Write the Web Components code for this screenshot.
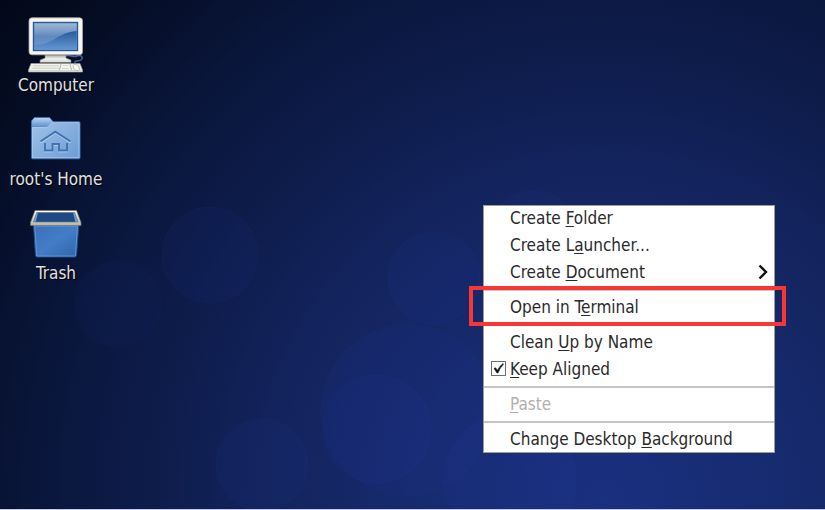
<!DOCTYPE html>
<html lang="en">
<head>
<meta charset="utf-8">
<title>Desktop</title>
<style>
  body { margin: 0; font: 17px/20px "DejaVu Sans Condensed", "DejaVu Sans", sans-serif; }
</style>
</head>
<body>
<desktop-surface>
  <desktop-shortcut icon="computer">Computer</desktop-shortcut>
  <desktop-shortcut icon="home">root's Home</desktop-shortcut>
  <desktop-shortcut icon="trash">Trash</desktop-shortcut>
  <context-menu slot="menu">
    <menu-entry>Create <u>F</u>older</menu-entry>
    <menu-entry>Create L<u>a</u>uncher...</menu-entry>
    <menu-entry submenu>Create <u>D</u>ocument</menu-entry>
    <menu-divider></menu-divider>
    <menu-entry marked>Open in T<u>e</u>rminal</menu-entry>
    <menu-divider></menu-divider>
    <menu-entry>Clean <u>U</u>p by Name</menu-entry>
    <menu-check><u>K</u>eep Aligned</menu-check>
    <menu-divider></menu-divider>
    <menu-entry disabled><u>P</u>aste</menu-entry>
    <menu-divider></menu-divider>
    <menu-entry>Change Desktop <u>B</u>ackground</menu-entry>
  </context-menu>
</desktop-surface>

<script>
const icons = {
  computer: `
    <defs>
      <linearGradient id="scr" x1="0" y1="0" x2="0" y2="1"><stop offset="0" stop-color="#a5b9d6"/><stop offset=".5" stop-color="#5f8ac0"/><stop offset="1" stop-color="#6d9bd2"/></linearGradient>
      <linearGradient id="low" x1="0" y1="0" x2="0" y2="1"><stop offset="0" stop-color="#285a9c"/><stop offset="1" stop-color="#6496d0"/></linearGradient>
      <linearGradient id="std" x1="0" y1="0" x2="0" y2="1"><stop offset="0" stop-color="#a8a8a2"/><stop offset=".5" stop-color="#f0f0ec"/><stop offset="1" stop-color="#d8d8d2"/></linearGradient>
    </defs>
    <path d="M37 39c4-2 8 2 12 0s7 2 4 4-7 0-6 3" fill="none" stroke="#3e6794" stroke-width="1.5"/>
    <path d="M17 38h21v3l5 2v2.500H12V43l5-2z" fill="url(#std)" stroke="#73736e" stroke-width=".7"/>
    <rect x="1" y=".8" width="53.500" height="37" rx="3" fill="#f5f5f2" stroke="#aaaaa5" stroke-width=".8"/>
    <rect x="5.500" y="5.500" width="44" height="28" fill="url(#scr)" stroke="#28599a" stroke-width="1.400"/>
    <path d="M6.500 28c20 0 21-12 42-14v18.500h-42z" fill="url(#low)"/>
    <path d="M3 46.500h49l2.500 6.500v2H.5v-2z" fill="#f2f2ee" stroke="#999993" stroke-width=".7"/>
    <path d="M1 53.500h53" stroke="#d5d5ce"/>
    <path d="M5 48.500h26M4.500 50h27M4 51.500h27M35 48.500h5M34 51.500h7" stroke="#cfcfc8" stroke-width=".7"/>
    <path d="M33 47l-1.500 6M42 47l1.500 6" stroke="#a5a59e" stroke-width=".8"/>
    <path d="M45 49c0-2 5-2 5.500 0l1 3c0 2-5 2-5.500 0z" fill="#f8f8f5" stroke="#a0a09a" stroke-width=".6"/>`,
  home: `
    <defs>
      <linearGradient id="fold" x1="0" y1="0" x2="1" y2="1"><stop offset="0" stop-color="#a4c5ea"/><stop offset="1" stop-color="#6b9cd4"/></linearGradient>
      <linearGradient id="tab" x1="0" y1="0" x2="0" y2="1"><stop offset="0" stop-color="#b7d2ef"/><stop offset="1" stop-color="#5b8fcb"/></linearGradient>
    </defs>
    <path d="M3.500 10l3-3.500h15L25 10.800h26q1 0 1 1v35q0 1-1 1H4.500q-1 0-1-1z" fill="url(#fold)" stroke="#3c6fae"/>
    <path d="M4 10l2.800-3h14.400l3.800 4-5.500 5H4z" fill="url(#tab)"/>
    <path d="M4.500 16.700h14l6-5h26.500v35H4.500z" fill="none" stroke="#abcaf0" stroke-width=".8"/>
    <path d="M12.500 31.500L27.300 21.700l15.200 9.800M17 33v7.500h7.500v-6.500h6.500v6.500h8V33" fill="none" stroke="#c0d8f2" stroke-width="1.500"/>
    <path d="M12.500 30.500L27.300 20.700l15.200 9.800M17 32v7.500h7.500V33h6.500v6.500h8V32" fill="none" stroke="#3f72b1" stroke-width="1.900"/>`,
  trash: `
    <defs>
      <linearGradient id="bin" x1="0" y1="0" x2="1" y2="1"><stop offset="0" stop-color="#3a70b7"/><stop offset=".5" stop-color="#427dc6"/><stop offset="1" stop-color="#2f64a6"/></linearGradient>
      <linearGradient id="rim" x1="0" y1="0" x2="0" y2="1"><stop offset="0" stop-color="#fff"/><stop offset="1" stop-color="#b5b5af"/></linearGradient>
    </defs>
    <path d="M5.500 20h45.300L48.500 50.500q-.2 1.500-1.700 1.500H9.200q-1.500 0-1.700-1.500z" fill="url(#bin)" stroke="#1d4a87"/>
    <path d="M6.800 21h42.700l-2 29.500q0 .5-.8.500H9.500q-.8 0-.8-.5z" fill="none" stroke="#669ddd" stroke-width=".8"/>
    <path d="M7.500 6.500h40.500l4 12H3.500z" fill="#1d4988"/>
    <path d="M8.700 8L10 8 7.500 17.500H5zM46.700 8h-1.500L47.500 17.500h3z" fill="#6a9edc"/>
    <path d="M2.500 17.500L7 5.500h41.500l4.500 12v3H2.500zM5.300 17h44.900L46.700 7.500H8.700z" fill="url(#rim)" fill-rule="evenodd" stroke="#77776f" stroke-width=".7"/>`
};

function define(name, markup, setup) {
  const template = document.createElement("template");
  template.innerHTML = markup;
  customElements.define(name, class extends HTMLElement {
    constructor() {
      super();
      this.attachShadow({ mode: "open" }).append(template.content.cloneNode(true));
    }
    connectedCallback() { if (setup) setup(this, this.shadowRoot); }
  });
}

define("desktop-surface", `
  <style>
    :host {
      display: block; position: relative; overflow: hidden; box-sizing: border-box;
      min-height: 100vh; padding: 17px 0; border-bottom: 1px solid #c3cae0;
      background: radial-gradient(circle at 73% 98%, #1a3080 0, #172b70 22%, #13235c 43%, #0d1b48 60%, #091539 74%, #050d25 88%, #020817 100%);
    }
    .lights { position: absolute; inset: 0; width: 100%; height: 100%; }
    .shortcuts { position: relative; display: flex; flex-direction: column; align-items: flex-start; gap: 16px; }
    .menu { position: absolute; top: 205px; right: 50px; }
  </style>
  <svg class="lights" viewBox="0 0 825 509" preserveAspectRatio="xMidYMid slice" aria-hidden="true">
    <g fill="#2445ae" fill-opacity=".08" stroke="#3458bd" stroke-opacity=".07">
      <circle cx="210" cy="255" r="48"/>
      <circle cx="118" cy="304" r="43" opacity=".7"/>
      <circle cx="434" cy="278" r="46"/>
      <circle cx="377" cy="429" r="54"/>
      <circle cx="262" cy="465" r="46"/>
      <circle cx="407" cy="410" r="85"/>
      <circle cx="510" cy="480" r="66"/>
      <circle cx="533" cy="237" r="46"/>
    </g>
  </svg>
  <main class="shortcuts"><slot></slot></main>
  <div class="menu"><slot name="menu"></slot></div>`);

define("desktop-shortcut", `
  <style>
    :host { display: block; }
    button {
      display: flex; flex-direction: column; align-items: center; gap: 2px;
      min-width: 112px; padding: 0; border: 0; background: none;
      color: #e0e0e0; font: inherit; text-shadow: 1px 1px 1px #000;
    }
    svg { width: 56px; height: 56px; }
  </style>
  <button type="button"><svg viewBox="0 0 56 56" aria-hidden="true"></svg><span><slot></slot></span></button>`,
  (host, root) => { root.querySelector("svg").innerHTML = icons[host.getAttribute("icon")]; });

define("context-menu", `
  <style>
    :host {
      display: flex; flex-direction: column; gap: 2px; box-sizing: border-box; min-width: 292px;
      border: 1px solid #9c9c98; background: #fff; color: #2a2a2a;
    }
  </style>
  <slot></slot>`, host => host.setAttribute("role", "menu"));

define("menu-entry", `
  <style>
    :host { display: block; position: relative; }
    button {
      display: flex; align-items: center; justify-content: space-between; width: 100%; height: 25px;
      padding: 0 6px 2px 26px; border: 0; background: none; color: inherit; font: inherit; text-align: left;
    }
    button:disabled { color: #b3b0ac; }
    ::slotted(u) { text-underline-offset: 2px; text-decoration-thickness: 1px; }
    svg { display: none; width: 10px; height: 16px; }
    :host([submenu]) svg { display: block; }
    .mark { display: none; position: absolute; inset: -9px -12px -6px -15px; border: 4px solid #f93636; pointer-events: none; z-index: 1; }
    :host([marked]) .mark { display: block; }
  </style>
  <button type="button" role="menuitem"><span><slot></slot></span>
    <svg viewBox="0 0 10 16" aria-hidden="true"><path d="M1.500 1.500L8 8l-6.500 6.500" fill="none" stroke="#111" stroke-width="2.400"/></svg>
  </button>
  <div class="mark"></div>`,
  (host, root) => { root.querySelector("button").disabled = host.hasAttribute("disabled"); });

define("menu-check", `
  <style>
    :host { display: block; }
    label { display: flex; align-items: center; gap: 4px; box-sizing: border-box; height: 25px; padding: 0 0 2px 7px; }
    .box { display: grid; }
    .box > * { grid-area: 1 / 1; }
    input { appearance: none; box-sizing: border-box; width: 15px; height: 15px; margin: 0; border: 1px solid #6f6f6f; background: #fff; }
    svg { width: 15px; height: 15px; visibility: hidden; pointer-events: none; }
    input:checked + svg { visibility: visible; }
    ::slotted(u) { text-underline-offset: 2px; text-decoration-thickness: 1px; }
  </style>
  <label><span class="box"><input type="checkbox" checked><svg viewBox="0 0 15 15" aria-hidden="true"><path d="M3 7.500l1.500-.8 2 2.600Q8.500 5 12 2.500l.5.700Q9 6.500 7 12H6z" fill="#111" stroke="#111" stroke-width=".5"/></svg></span><span><slot></slot></span></label>`);

define("menu-divider", `
  <style>
    :host { display: block; margin: 2px 0; }
    hr { height: 2px; margin: 0; border: 0; background: #c6c6c6; }
  </style>
  <hr>`);
</script>
</body>
</html>
